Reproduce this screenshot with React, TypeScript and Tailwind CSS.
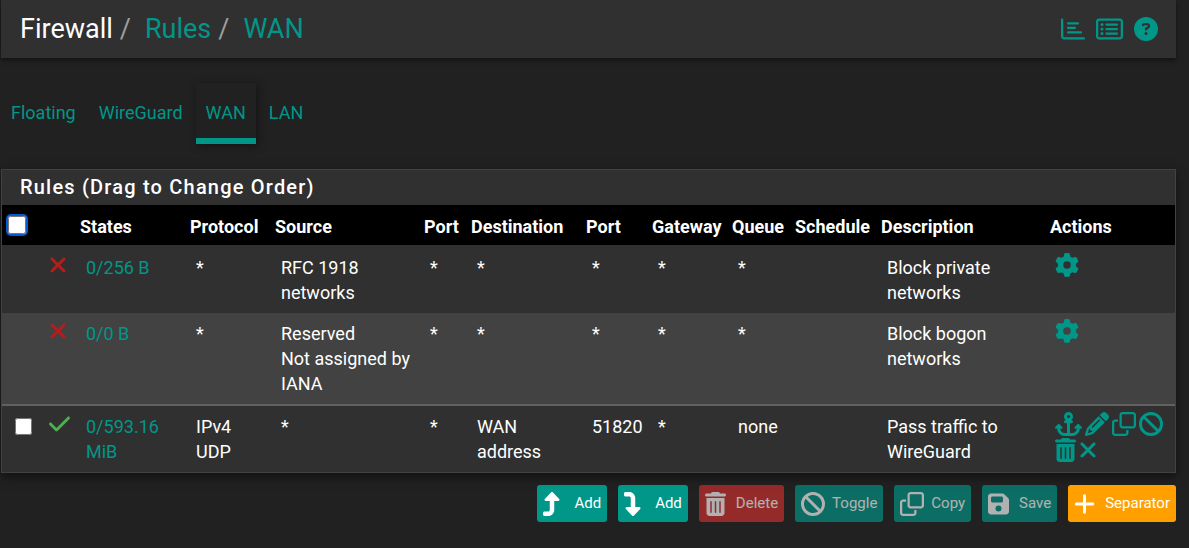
import { useState } from "react";
import type { ReactNode } from "react";
import clsx from "clsx";
import type { IconType } from "react-icons";
import {
  FaAnchor,
  FaBan,
  FaCheck,
  FaCircleQuestion,
  FaFloppyDisk,
  FaGear,
  FaPencil,
  FaPlus,
  FaRegChartBar,
  FaRegClone,
  FaRegRectangleList,
  FaTrashCan,
  FaTurnDown,
  FaTurnUp,
  FaXmark,
} from "react-icons/fa6";

type Action = { label: string; icon: IconType; size: string };

type Rule = {
  id: string;
  pass: boolean;
  selectable: boolean;
  states: string;
  protocol: string;
  source: ReactNode;
  sourcePort: string;
  destination: string;
  destPort: string;
  gateway: string;
  queue: string;
  schedule: string;
  description: string;
  actions: Action[];
};

// Icons share one height, the width depends on the glyph
const narrow = "h-6 w-[18px]";
const medium = "h-6 w-[21px]";
const square = "h-6 w-6";
const wide = "h-6 w-[27px]";

const settings: Action[] = [{ label: "Settings", icon: FaGear, size: square }];

const rules: Rule[] = [
  {
    id: "private",
    pass: false,
    selectable: false,
    states: "0/256 B",
    protocol: "*",
    source: "RFC 1918 networks",
    sourcePort: "*",
    destination: "*",
    destPort: "*",
    gateway: "*",
    queue: "*",
    schedule: "",
    description: "Block private networks",
    actions: settings,
  },
  {
    id: "bogon",
    pass: false,
    selectable: false,
    states: "0/0 B",
    protocol: "*",
    source: <>Reserved<br />Not assigned by IANA</>,
    sourcePort: "*",
    destination: "*",
    destPort: "*",
    gateway: "*",
    queue: "*",
    schedule: "",
    description: "Block bogon networks",
    actions: settings,
  },
  {
    id: "wireguard",
    pass: true,
    selectable: true,
    states: "0/593.16 MiB",
    protocol: "IPv4 UDP",
    source: "*",
    sourcePort: "*",
    destination: "WAN address",
    destPort: "51820",
    gateway: "*",
    queue: "none",
    schedule: "",
    description: "Pass traffic to WireGuard",
    actions: [
      { label: "Move checked rules above this one", icon: FaAnchor, size: wide },
      { label: "Edit", icon: FaPencil, size: square },
      { label: "Copy", icon: FaRegClone, size: square },
      { label: "Disable", icon: FaBan, size: square },
      { label: "Delete this rule", icon: FaTrashCan, size: medium },
      { label: "Kill states", icon: FaXmark, size: narrow },
    ],
  },
];

const columns = [
  { label: "States", width: "w-[110px]" },
  { label: "Protocol", width: "w-[85px]" },
  { label: "Source", width: "w-[149px]" },
  { label: "Port", width: "w-[47px]" },
  { label: "Destination", width: "w-[115px]" },
  { label: "Port", width: "w-[66px]" },
  { label: "Gateway", width: "w-[80px]" },
  { label: "Queue", width: "w-[63px]" },
  { label: "Schedule", width: "w-[86px]" },
  { label: "Description", width: "w-[169px]" },
  { label: "Actions", width: "w-[131px]" },
];

const buttons = [
  { label: "Add", icon: FaTurnUp, size: narrow, color: "bg-[#009688]", disabled: false },
  { label: "Add", icon: FaTurnDown, size: narrow, color: "bg-[#009688]", disabled: false },
  { label: "Delete", icon: FaTrashCan, size: medium, color: "bg-[#d32f2f]", disabled: true },
  { label: "Toggle", icon: FaBan, size: square, color: "bg-[#009688]", disabled: true },
  { label: "Copy", icon: FaRegClone, size: square, color: "bg-[#009688]", disabled: true },
  { label: "Save", icon: FaFloppyDisk, size: medium, color: "bg-[#009688]", disabled: true },
  { label: "Separator", icon: FaPlus, size: medium, color: "bg-[#ffa000]", disabled: false },
];

function Header() {
  return (
    <header className="flex h-[58px] items-center justify-between bg-[#303030] pr-[18px] pl-[19px] shadow-[0_2px_5px_rgba(0,0,0,0.5)]">
      <nav aria-label="Breadcrumb" className="flex text-[27px] leading-8">
        <span className="text-white">Firewall</span>
        <span className="px-[7px] text-[#9e9e9e]">/</span>
        <a href="#rules" className="pl-[7px]">Rules</a>
        <span className="px-[7px] text-[#9e9e9e]">/</span>
        <a href="#wan" className="pl-[7px]">WAN</a>
      </nav>
      <div className="flex items-center gap-[11px]">
        <a href="#status" aria-label="Status"><FaRegChartBar className={square} /></a>
        <a href="#log" aria-label="Log entries"><FaRegRectangleList className={wide} /></a>
        <a href="#help" aria-label="Help"><FaCircleQuestion className={square} /></a>
      </div>
    </header>
  );
}

function Tabs() {
  return (
    <nav aria-label="Interfaces" className="mt-[25px] flex gap-[3px]">
      {["Floating", "WireGuard", "WAN", "LAN"].map((tab) => (
        <a
          key={tab}
          href={`#${tab}`}
          className={clsx(
            "flex h-[61px] items-center border-b-6 px-[10px] pt-1",
            tab === "WAN" ? "border-[#009688] shadow-[2px_2px_8px_rgba(0,0,0,0.4)]" : "border-transparent",
          )}
        >
          {tab}
        </a>
      ))}
    </nav>
  );
}

function RuleRow({ rule, checked, onCheck }: { rule: Rule; checked: boolean; onCheck: (value: boolean) => void }) {
  const cell = "py-2 pl-3";
  return (
    <tr className="border-[#303030] align-top first:border-t-2 even:bg-[#424242] last:border-t-2 last:border-[#616161]">
      <td className={cell}>
        {rule.selectable && (
          <input
            type="checkbox"
            aria-label={`Select ${rule.description}`}
            checked={checked}
            onChange={(e) => onCheck(e.target.checked)}
            className="mt-1 ml-px block size-[17px]"
          />
        )}
      </td>
      <td className="pt-[6px] pl-[11px]">
        {rule.pass ? (
          <FaCheck aria-label="Pass" className={clsx(medium, "text-[#4caf50]")} />
        ) : (
          <FaXmark aria-label="Block" className={clsx(narrow, "text-[#b71c1c]")} />
        )}
      </td>
      <td className={cell}><a href="#states">{rule.states}</a></td>
      <td className={cell}>{rule.protocol}</td>
      <td className={cell}>{rule.source}</td>
      <td className={cell}>{rule.sourcePort}</td>
      <td className={cell}>{rule.destination}</td>
      <td className={cell}>{rule.destPort}</td>
      <td className={cell}>{rule.gateway}</td>
      <td className={cell}>{rule.queue}</td>
      <td className={cell}>{rule.schedule}</td>
      <td className={cell}>{rule.description}</td>
      <td className="pt-[6px] pl-[11px]">
        <div className="flex flex-wrap gap-x-[3px] gap-y-[2px]">
          {rule.actions.map(({ label, icon: Icon, size }) => (
            <a key={label} href="#action" aria-label={label}><Icon className={size} /></a>
          ))}
        </div>
      </td>
    </tr>
  );
}

export default function App() {
  const [checked, setChecked] = useState(false);

  return (
    <div className="min-h-screen bg-[#212121] pr-[13px] pl-px font-[Roboto,sans-serif] text-[18px] leading-[25px] text-white [&_a]:text-[#009688]">
      <Header />
      <Tabs />

      <section className="mt-[25px] border border-[#424242] bg-[#303030] shadow-[0_4px_10px_rgba(0,0,0,0.5)]">
        <h2 className="flex h-[35px] items-center pl-[18px] text-[20px] font-medium tracking-[0.06em]">
          Rules (Drag to Change Order)
        </h2>
        <table className="w-full table-fixed border-collapse">
          <thead>
            <tr className="h-[41px] bg-black text-left">
              <th className="w-[36px] pl-1">
                <span className="block w-fit rounded-[5px] bg-[#0b57d0] p-[2px]">
                  <input
                    type="checkbox"
                    aria-label="Select all rules"
                    checked={checked}
                    onChange={(e) => setChecked(e.target.checked)}
                    className="block size-[18px] outline-none"
                  />
                </span>
              </th>
              <th className="w-[36px]" />
              {columns.map((column, i) => (
                <th key={i} className={clsx("pt-[2px] pl-[6px] font-bold", column.width)}>{column.label}</th>
              ))}
            </tr>
          </thead>
          <tbody>
            {rules.map((rule) => (
              <RuleRow key={rule.id} rule={rule} checked={checked} onCheck={setChecked} />
            ))}
          </tbody>
        </table>
      </section>

      <div className="mt-3 flex flex-wrap justify-end gap-[11px]">
        {buttons.map(({ label, icon: Icon, size, color, disabled }, i) => (
          <button
            key={i}
            type="button"
            disabled={disabled}
            className={clsx("flex h-[37px] items-center gap-[7px] rounded-[3px] px-[6px] text-[15px]", color, disabled && "opacity-65")}
          >
            <span className="w-6"><Icon className={size} /></span>
            {label}
          </button>
        ))}
      </div>
    </div>
  );
}
